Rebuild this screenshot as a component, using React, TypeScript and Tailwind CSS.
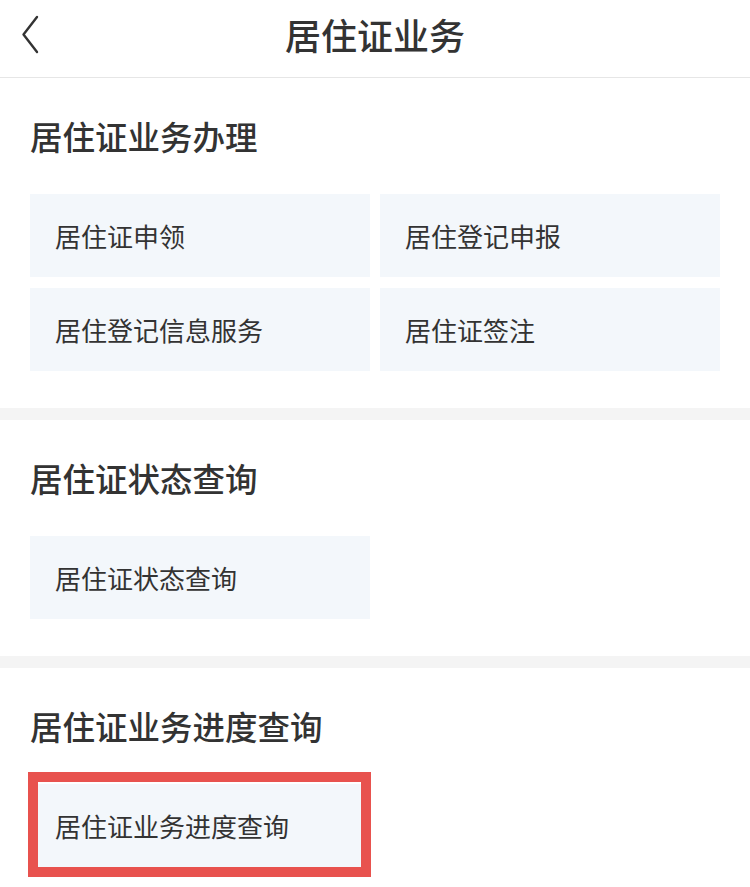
const font = { fontFamily: '"Noto Sans CJK SC", "Noto Sans", sans-serif' };

type Section = { title: string; items: string[]; marked?: boolean };

const sections: Section[] = [
  { title: "居住证业务办理", items: ["居住证申领", "居住登记申报", "居住登记信息服务", "居住证签注"] },
  { title: "居住证状态查询", items: ["居住证状态查询"] },
  { title: "居住证业务进度查询", items: ["居住证业务进度查询"], marked: true },
];

function Tile({ label, marked }: { label: string; marked?: boolean }) {
  return (
    <div className="relative h-[83px] bg-[#f3f7fb] flex items-center pl-[25px] text-[26px] text-[#333333]">
      {label}
      {marked && (
        <div className="absolute left-[-2px] top-[-12px] right-[-1px] bottom-[-10px] border-[10px] border-[#e8524e] pointer-events-none" />
      )}
    </div>
  );
}

export default function App() {
  return (
    <div className="w-[750px] min-h-[887px] bg-white overflow-hidden" style={font}>
      <div className="relative h-[78px] border-b border-[#e6e6e6] flex justify-center pt-[12px]">
        <svg className="absolute left-[21px] top-[15px]" width="20" height="40" viewBox="0 0 20 40">
          <path d="M16 2 L2.5 19.5 L16 37" fill="none" stroke="#333333" strokeWidth="2.4" strokeLinecap="round" strokeLinejoin="round" />
        </svg>
        <div className="text-[36px] leading-[44px] font-medium text-[#333333]">居住证业务</div>
      </div>
      {sections.map((s, i) => (
        <div key={s.title}>
          {i > 0 && <div className="h-[12px] bg-[#f4f4f4]" />}
          <div className="pt-[38px] pb-[37px] px-[30px]">
            <div className="text-[32.5px] leading-[40px] font-medium text-[#333333]">{s.title}</div>
            <div className="mt-[38px] grid grid-cols-2 gap-x-[10px] gap-y-[11px]">
              {s.items.map((it) => (
                <Tile key={it} label={it} marked={s.marked} />
              ))}
            </div>
          </div>
        </div>
      ))}
    </div>
  );
}
